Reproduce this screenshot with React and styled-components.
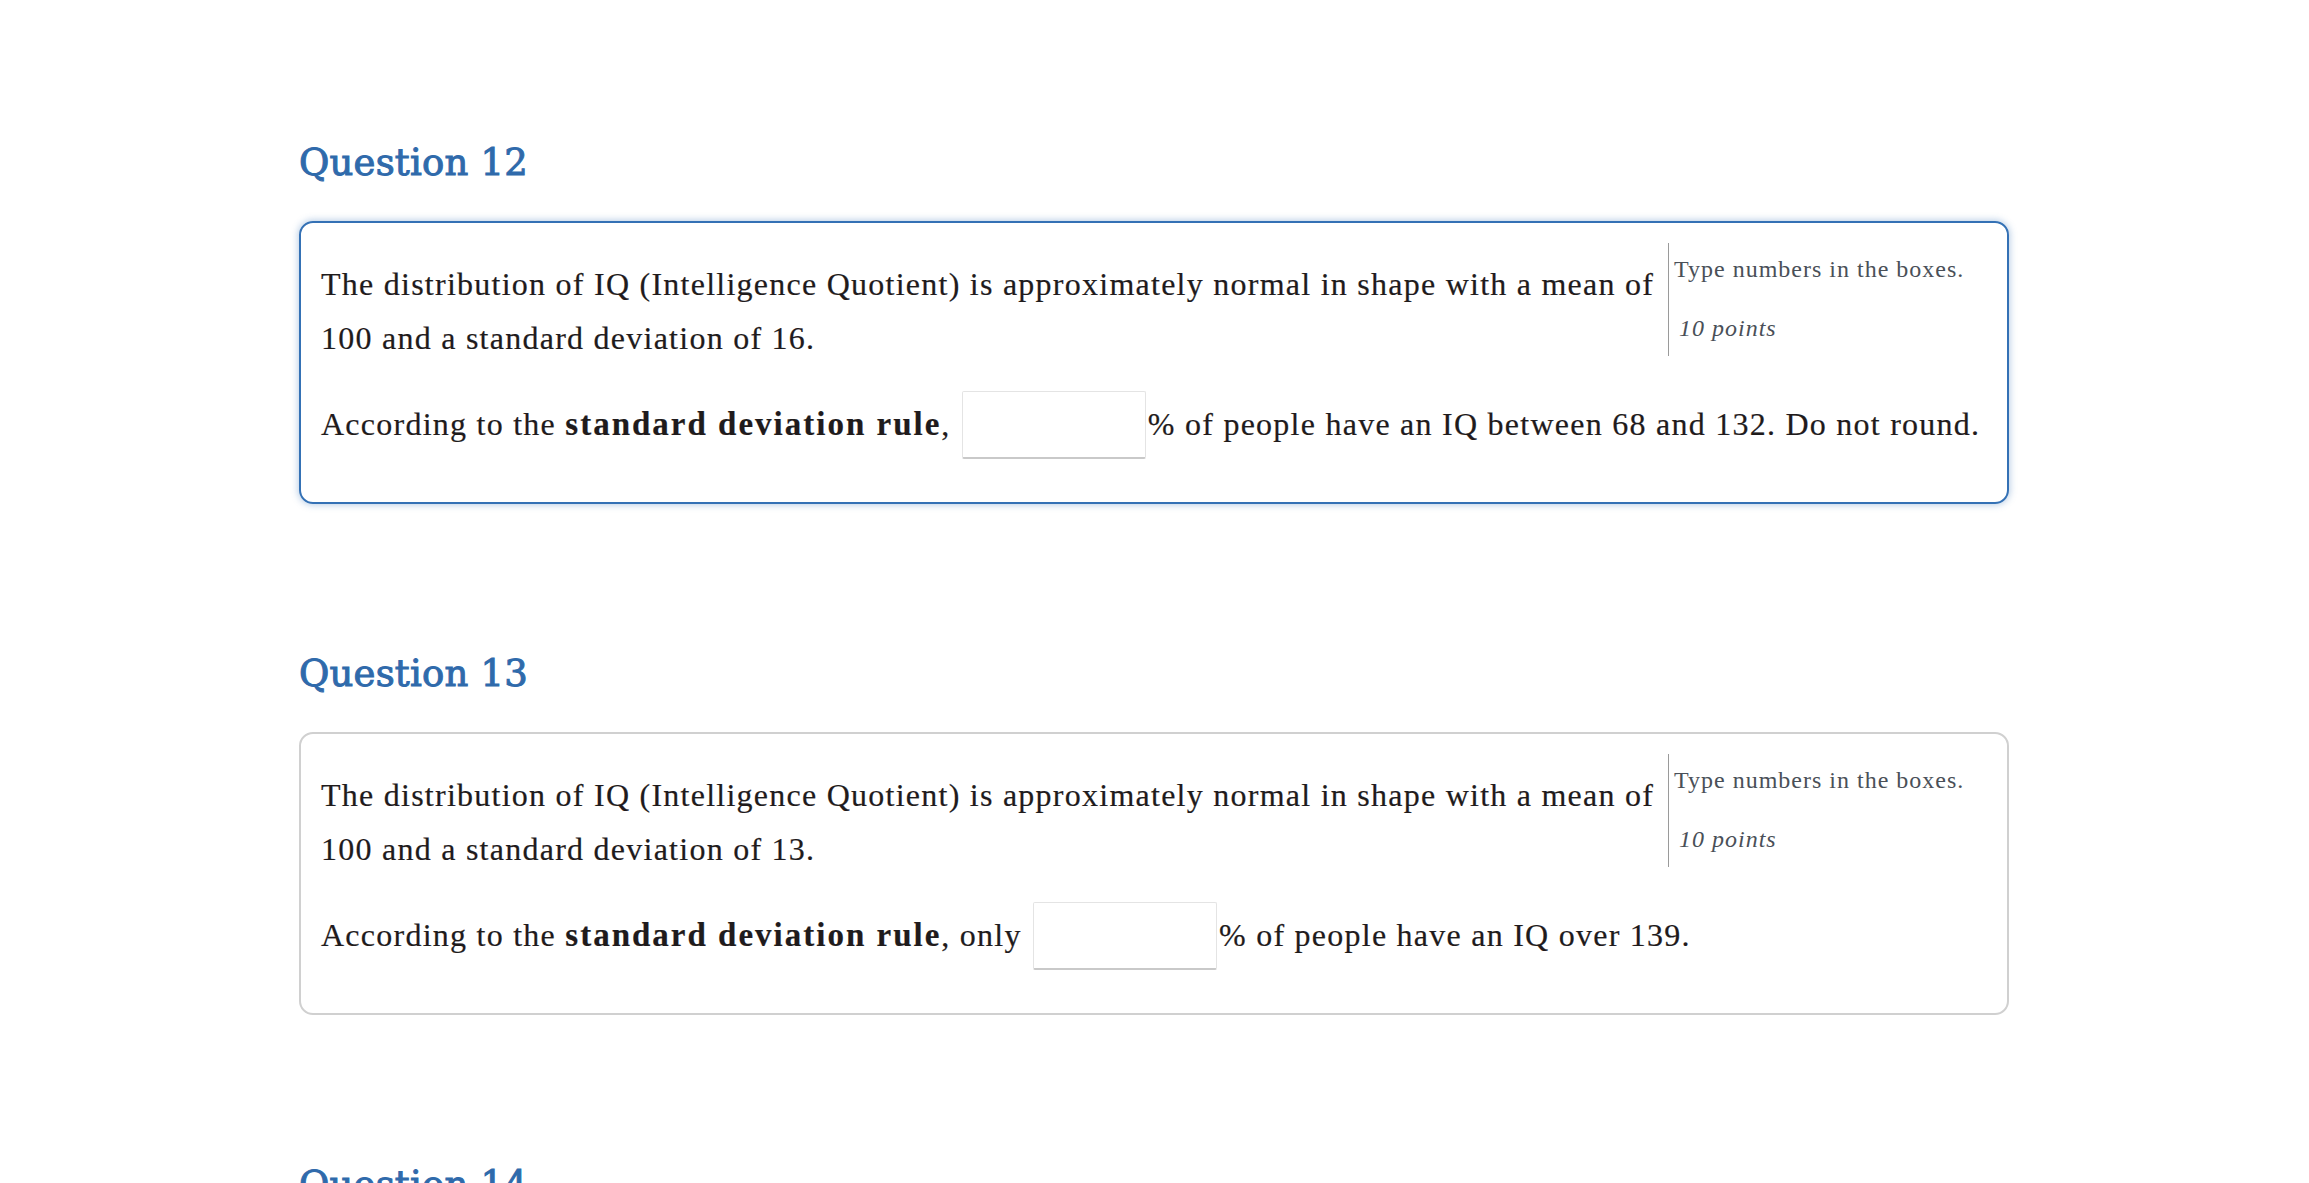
import React from 'react'
import styled, { createGlobalStyle } from 'styled-components'

const GlobalStyle = createGlobalStyle`
  html, body {
    margin: 0;
    padding: 0;
    background: #fff;
  }
  body {
    font-family: 'Liberation Serif', 'Times New Roman', serif;
    color: #1f1b1c;
  }
`

const Page = styled.main`
  width: 1710px;
  padding: 144px 0 0 299px;
`

const Section = styled.section`
  & + & {
    margin-top: 151px;
  }
`

const Title = styled.h2`
  margin: 0 0 40px;
  font-family: 'DejaVu Serif', Georgia, serif;
  font-size: 37px;
  line-height: 37px;
  font-weight: normal;
  letter-spacing: 0.2px;
  color: #2f6aab;
  -webkit-text-stroke: 1px #2f6aab;
`

const Card = styled.div`
  display: flow-root;
  border: 2px solid ${p => (p.$active ? '#3471b5' : '#d0d0d0')};
  border-radius: 14px;
  box-shadow: ${p => (p.$active ? '0 0 7px 1px rgba(52, 113, 181, 0.35)' : 'none')};
  padding: 20px 20px 43px;
  font-size: 32px;
  line-height: 54px;
  letter-spacing: 1.25px;
  -webkit-text-stroke: 0.2px #1f1b1c;
`

const Aside = styled.aside`
  float: right;
  width: 313px;
  border-left: 1px solid #9a9a9a;
  padding: 10px 0 12px 5px;
  font-size: 24px;
  line-height: 32px;
  letter-spacing: 1px;
  color: #4a5058;
  -webkit-text-stroke: 0;
`

const Hint = styled.div``

const Points = styled.div`
  margin-top: 27px;
  padding-left: 5px;
  font-style: italic;
`

const Prompt = styled.p`
  margin: 14px 0 0;
`

const Answer = styled.p`
  margin: 26px 0 0;
`

const Strong = styled.b`
  font-weight: bold;
  font-size: 33px;
  letter-spacing: 2px;
`

const Blank = styled.input`
  box-sizing: border-box;
  width: 184px;
  height: 68px;
  margin: 0 2px;
  padding: 0 8px;
  border: 1px solid #e4e4e4;
  border-bottom: 2px solid #c9c9c9;
  border-radius: 2px;
  background: #fff;
  font-family: inherit;
  font-size: 32px;
  line-height: normal;
  color: #231f20;
  vertical-align: baseline;
  outline: none;
`

const questions = [
  {
    n: 12,
    active: true,
    sd: 16,
    before: '',
    after: '% of people have an IQ between 68 and 132. Do not round.'
  },
  {
    n: 13,
    active: false,
    sd: 13,
    before: ' only',
    after: '% of people have an IQ over 139.'
  }
]

const Question = ({ n, active, sd, before, after }) => (
  <Section>
    <Title>Question {n}</Title>
    <Card $active={active}>
      <Aside>
        <Hint>Type numbers in the boxes.</Hint>
        <Points>10 points</Points>
      </Aside>
      <Prompt>
        The distribution of IQ (Intelligence Quotient) is approximately normal
        in shape with a mean of 100 and a standard deviation of {sd}.
      </Prompt>
      <Answer>
        According to the <Strong>standard deviation rule</Strong>,{before}{' '}
        <Blank type='text' aria-label={`Question ${n} answer`} />
        {after}
      </Answer>
    </Card>
  </Section>
)

export default function App () {
  return (
    <>
      <GlobalStyle />
      <Page>
        {questions.map(q => (
          <Question key={q.n} {...q} />
        ))}
        <Section>
          <Title>Question 14</Title>
        </Section>
      </Page>
    </>
  )
}
